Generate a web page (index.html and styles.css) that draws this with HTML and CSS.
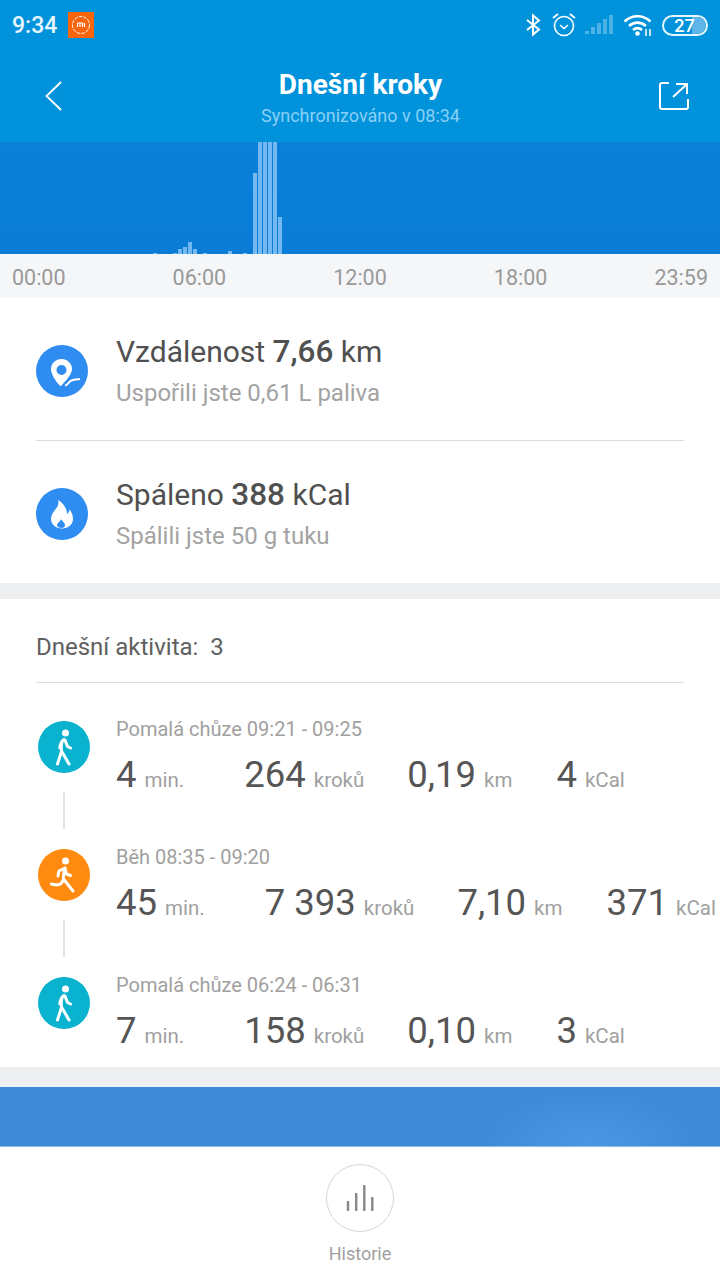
FILE: index.html
```html
<!DOCTYPE html>
<html lang="cs">

<head>
    <meta charset="UTF-8">
    <title>Dnešní kroky</title>
    <link rel="stylesheet" href="styles.css">
</head>

<body>
    <header class="top">
        <div class="status">
            <span class="clock">9:34</span>
            <span class="mi_badge">
                <svg width="26" height="26" viewBox="0 0 26 26">
                    <circle cx="13" cy="13" r="8.500" fill="none" stroke="#fff" stroke-width="1" stroke-dasharray="3.500 1.200" />
                    <path d="M9.500 11h2.500v4M12 11h2.500v4M9.500 11v4M16.500 11v4" fill="none" stroke="#fff" stroke-width="1.200" />
                </svg>
            </span>
            <span class="status_icons">
                <svg width="16" height="24" viewBox="0 0 16 24">
                    <path d="M2 7l12 9.500-6 5V2.500l6 5L2 17" fill="none" stroke="#fff" stroke-width="2" />
                </svg>
                <svg class="alarm" width="26" height="26" viewBox="0 0 26 26">
                    <circle cx="13" cy="14" r="9.500" fill="none" stroke="#fff" stroke-width="1.600" />
                    <path d="M9 13l4 3.500 4-3.500" fill="none" stroke="#fff" stroke-width="1.600" />
                    <path d="M2 6l5-4M24 6l-5-4" fill="none" stroke="#fff" stroke-width="1.800" />
                </svg>
                <svg class="signal" width="28" height="22" viewBox="0 0 28 22">
                    <rect x="0" y="17" width="4" height="3" />
                    <rect x="6" y="13" width="4" height="7" />
                    <rect x="12" y="9" width="4" height="11" />
                    <rect x="18" y="5" width="4" height="15" />
                    <rect x="24" y="1" width="4" height="19" />
                </svg>
                <svg class="wifi" width="30" height="24" viewBox="0 0 30 24">
                    <path d="M1.500 8.500C9 1.500 20 1.500 27.500 8.500M6 13c5-4.500 12-4.500 17 0M10 17c3-2.500 6-2.500 9 0" fill="none" stroke="#fff" stroke-width="2.600" />
                    <circle cx="14.500" cy="20.500" r="2.300" fill="#fff" />
                    <path d="M23 16v7M27 16v7" stroke="#fff" stroke-width="1.500" />
                </svg>
                <span class="battery"><span class="battery_fill"></span><span class="battery_num">27</span></span>
            </span>
        </div>
        <div class="titlebar">
            <svg class="back" width="17" height="30" viewBox="0 0 17 30">
                <path d="M16 1L1.500 15 16 29" fill="none" stroke="#fff" stroke-width="1.800" />
            </svg>
            <div class="title">
                <h1>Dnešní kroky</h1>
                <p>Synchronizováno v 08:34</p>
            </div>
            <svg class="share" width="30" height="30" viewBox="0 0 30 30">
                <path d="M10 2H3a2 2 0 0 0-2 2v22a2 2 0 0 0 2 2h24a2 2 0 0 0 2-2v-8" fill="none" stroke="#fff" stroke-width="2" />
                <path d="M14 16L28 3M17 3h11v10" fill="none" stroke="#fff" stroke-width="2" />
            </svg>
        </div>
    </header>

    <section class="chart">
        <i style="grid-column:31;height:1px"></i>
        <i style="grid-column:35;height:1px"></i>
        <i style="grid-column:36;height:5px"></i>
        <i style="grid-column:37;height:7px"></i>
        <i style="grid-column:38;height:12px"></i>
        <i style="grid-column:39;height:5px"></i>
        <i style="grid-column:41;height:1px"></i>
        <i style="grid-column:46;height:3px"></i>
        <i style="grid-column:49;height:1px"></i>
        <i style="grid-column:51;height:81px"></i>
        <i style="grid-column:52;height:112px"></i>
        <i style="grid-column:53;height:112px"></i>
        <i style="grid-column:54;height:112px"></i>
        <i style="grid-column:55;height:112px"></i>
        <i style="grid-column:56;height:37px"></i>
    </section>

    <div class="axis">
        <span>00:00</span>
        <span>06:00</span>
        <span>12:00</span>
        <span>18:00</span>
        <span>23:59</span>
    </div>

    <section class="summary">
        <div class="stat stat_first">
            <span class="stat_icon">
                <svg width="52" height="52" viewBox="0 0 52 52">
                    <path fill-rule="evenodd" fill="#fff" d="M25.500 14C19.500 14 15 18.500 15 24c0 5 4.500 12 8.500 16.300.8.800 1.500.800 2.200 0C29.500 36 36 29.500 36 24c0-5.500-4.500-10-10.500-10zm0 6a5 5 0 1 1 0 10 5 5 0 0 1 0-10z" />
                    <path d="M29 40.500c3-.5 3.500-4 6.500-5 2.500-.8 5-1 8.500-1.500" fill="none" stroke="#2f8cf0" stroke-width="5" />
                    <path d="M29 40.500c3-.5 3.500-4 6.500-5 2.500-.8 5-1 8.500-1.500" fill="none" stroke="#fff" stroke-width="2" />
                </svg>
            </span>
            <div>
                <h2>Vzdálenost <b>7,66</b> km</h2>
                <p>Uspořili jste 0,61 L paliva</p>
            </div>
        </div>
        <div class="stat">
            <span class="stat_icon">
                <svg width="52" height="52" viewBox="0 0 52 52">
                    <path fill="#fff" fill-rule="evenodd" d="M22 12c1.500 5-1 7.500-3.500 10.500C16.500 25 15 28 15 31c0 5.500 5 9.500 11 9.500S37 36.500 37 31c0-4-1.500-7-3.500-9.500-.3 2-1 3.500-2.500 4.500C31 20.500 27 14.500 22 12zm3 19c.5 2 4 3 4 6.500 0 1.500-1.500 2.500-3.500 2.500S21 39 21 37.500c0-3 3.500-3.500 4-6.500z" />
                </svg>
            </span>
            <div>
                <h2>Spáleno <b>388</b> kCal</h2>
                <p>Spálili jste 50 g tuku</p>
            </div>
        </div>
    </section>

    <section class="activity">
        <h3 class="activity_head">Dnešní aktivita:&nbsp; 3</h3>

        <div class="run_row">
            <div class="marker">
                <span class="dot dot_walk">
                    <svg width="52" height="52" viewBox="0 0 52 52">
                        <use href="#walker" />
                    </svg>
                </span>
                <span class="link"></span>
            </div>
            <div class="run_text">
                <p>Pomalá chůze 09:21 - 09:25</p>
                <div class="nums">
                    <span class="n n_min"><b>4</b>min.</span>
                    <span class="n n_steps"><b>264</b>kroků</span>
                    <span class="n n_km"><b>0,19</b>km</span>
                    <span class="n"><b>4</b>kCal</span>
                </div>
            </div>
        </div>

        <div class="run_row">
            <div class="marker">
                <span class="dot dot_run">
                    <svg width="52" height="52" viewBox="0 0 52 52">
                        <circle cx="27.500" cy="12" r="3.500" fill="#fff" />
                        <path d="M21 22l6-3c-1 4-2 8-1.500 11L35 42M27 19l1.500 6 4 1.500M21 22c-.5 2-1 3.500-1 5M25.500 30c-1 3-2.500 5-4.500 5.500-2.500.5-5 .3-7.500-.5" fill="none" stroke="#fff" stroke-width="3" stroke-linecap="round" stroke-linejoin="round" />
                    </svg>
                </span>
                <span class="link"></span>
            </div>
            <div class="run_text">
                <p>Běh 08:35 - 09:20</p>
                <div class="nums">
                    <span class="n n_min"><b>45</b>min.</span>
                    <span class="n n_steps"><b>7 393</b>kroků</span>
                    <span class="n n_km"><b>7,10</b>km</span>
                    <span class="n"><b>371</b>kCal</span>
                </div>
            </div>
        </div>

        <div class="run_row run_last">
            <div class="marker">
                <span class="dot dot_walk">
                    <svg width="52" height="52" viewBox="0 0 52 52">
                        <use href="#walker" />
                    </svg>
                </span>
            </div>
            <div class="run_text">
                <p>Pomalá chůze 06:24 - 06:31</p>
                <div class="nums">
                    <span class="n n_min"><b>7</b>min.</span>
                    <span class="n n_steps"><b>158</b>kroků</span>
                    <span class="n n_km"><b>0,10</b>km</span>
                    <span class="n"><b>3</b>kCal</span>
                </div>
            </div>
        </div>
    </section>

    <div class="banner"></div>

    <footer class="bottom">
        <span class="hist_btn">
            <svg width="28" height="26" viewBox="0 0 28 26">
                <path d="M2 26V16M10.200 26V8M18.300 26V0M26.300 26V12" fill="none" stroke="#888" stroke-width="2.400" />
            </svg>
        </span>
        <span class="hist_label">Historie</span>
    </footer>

    <svg width="0" height="0" class="defs">
        <symbol id="walker" viewBox="0 0 52 52">
            <circle cx="27.500" cy="12" r="3.500" fill="#fff" />
            <path d="M26 18.500c-2.500 1.500-3 7-2.500 12L19.500 43M23.500 30l7.500 13M27 19l2.500 6.500 3 1.500" fill="none" stroke="#fff" stroke-width="3" stroke-linecap="round" stroke-linejoin="round" />
            <path d="M25 19c-2 1.500-3 4-3.500 8" fill="none" stroke="#fff" stroke-width="2.500" stroke-linecap="round" />
        </symbol>
    </svg>
</body>

</html>
```

FILE: styles.css
```css
* {
    box-sizing: border-box;
}

html,
body {
    margin: 0;
    padding: 0;
}

body {
    width: 720px;
    height: 1280px;
    overflow: hidden;
    background-color: #eeeff1;
    font-family: Roboto, "Noto Sans", sans-serif;
    color: #555555;
}

h1,
h2,
h3,
p {
    margin: 0;
    font-weight: normal;
}

.defs {
    display: block;
    height: 0;
}

/* top */
.top {
    height: 142px;
    background: #0092da;
    color: white;
}

.status {
    height: 50px;
    display: flex;
    align-items: center;
    padding-left: 12px;
    padding-right: 12px;
}

.clock {
    font-size: 23px;
    font-weight: 500;
    color: #e6f6ff;
}

.mi_badge {
    width: 26px;
    height: 26px;
    margin-left: 11px;
    background: #f9650f;
    display: flex;
}

.status_icons {
    margin-left: auto;
    display: flex;
    align-items: center;
}

.alarm {
    margin-left: 10px;
}

.signal {
    margin-left: 8px;
    fill: #ffffff;
    opacity: 0.3;
}

.wifi {
    margin-left: 10px;
}

.battery {
    position: relative;
    width: 46px;
    height: 21px;
    margin-left: 9px;
    border: 2px solid #e6f6ff;
    border-radius: 11px;
    overflow: hidden;
}

.battery_fill {
    position: absolute;
    left: 28px;
    top: 0;
    bottom: 0;
    right: 0;
    background: #5db5ea;
}

.battery_num {
    position: relative;
    display: block;
    text-align: center;
    font-size: 18px;
    font-weight: 500;
    line-height: 17px;
    margin-right: 1px;
}

.titlebar {
    display: flex;
    align-items: center;
    justify-content: space-between;
    height: 72px;
    margin-top: 10px;
    padding-left: 45px;
    padding-right: 31px;
}

.title {
    text-align: center;
    margin-top: 5px;
}

.title h1 {
    font-size: 28px;
    font-weight: 700;
    line-height: 32px;
    color: white;
}

.title p {
    font-size: 18px;
    line-height: 24px;
    margin-top: 3px;
    color: #8ad0f6;
}

/* chart */
.chart {
    height: 112px;
    display: grid;
    grid-template-columns: repeat(144, 5px);
    align-items: end;
    padding-left: 3px;
    background: linear-gradient(#0a80d8, #0a7cd6);
}

.chart i {
    grid-row: 1;
    display: block;
    width: 4px;
    background: #73b8f0;
}

.axis {
    height: 44px;
    display: flex;
    justify-content: space-between;
    align-items: center;
    padding-left: 12px;
    padding-right: 12px;
    padding-top: 2px;
    background: #f5f6f8;
    font-size: 21.500px;
    color: #999999;
}

/* summary */
.summary {
    height: 285px;
    padding-left: 36px;
    padding-right: 36px;
    background: white;
}

.stat {
    height: 142px;
    display: flex;
    align-items: center;
    gap: 28px;
    padding-top: 4px;
}

.stat_first {
    border-bottom: 1px solid #dcdcdc;
    height: 143px;
}

.stat_icon {
    width: 52px;
    height: 52px;
    flex: none;
    display: flex;
    border-radius: 50%;
    background: #2f8cf0;
}

.stat h2 {
    font-size: 30px;
    line-height: 38px;
    color: #505050;
}

.stat h2 b {
    font-size: 31.500px;
    font-weight: 500;
}

.stat p {
    font-size: 24px;
    line-height: 34px;
    margin-top: 5px;
    color: #a3a3a3;
}

/* activity */
.activity {
    height: 468px;
    margin-top: 16px;
    padding-left: 36px;
    padding-right: 0;
    background: white;
}

.activity_head {
    height: 84px;
    margin-right: 36px;
    margin-bottom: 38px;
    display: flex;
    align-items: center;
    padding-top: 12px;
    border-bottom: 1px solid #dcdcdc;
    font-size: 24px;
    color: #606060;
}

.run_row {
    display: flex;
    height: 128px;
    padding-left: 2px;
}

.run_last {
    height: 90px;
}

.marker {
    width: 52px;
    flex: none;
    display: flex;
    flex-direction: column;
    align-items: center;
}

.dot {
    width: 52px;
    height: 52px;
    flex: none;
    display: flex;
    border-radius: 50%;
}

.dot_walk {
    background: #09b2cf;
}

.dot_run {
    background: #ff8a10;
}

.link {
    width: 2px;
    height: 37px;
    margin-top: 19px;
    flex: none;
    background: #e2e2e2;
}

.run_text {
    margin-left: 26px;
    margin-top: -4px;
}

.run_text p {
    font-size: 20px;
    line-height: 24px;
    color: #a0a0a0;
}

.nums {
    display: flex;
    align-items: baseline;
    margin-top: 12px;
    white-space: nowrap;
}

.n {
    font-size: 20.500px;
    color: #a0a0a0;
}

.n b {
    font-size: 36.500px;
    font-weight: 400;
    color: #555555;
    margin-right: 8px;
}

.n_min {
    margin-right: 60px;
}

.n_steps {
    margin-right: 43px;
}

.n_km {
    margin-right: 44px;
}

/* banner and bottom */
.banner {
    height: 60px;
    margin-top: 20px;
    border-bottom: 1px solid #8fbbea;
    background: radial-gradient(ellipse 110px 60px at 590px 60px, #4a96e4, #3f89d9 100%);
}

.bottom {
    height: 133px;
    display: flex;
    flex-direction: column;
    align-items: center;
    padding-top: 17px;
    background: white;
}

.hist_btn {
    width: 68px;
    height: 68px;
    display: flex;
    align-items: center;
    justify-content: center;
    border: 1px solid #d6d6d6;
    border-radius: 50%;
}

.hist_label {
    margin-top: 11px;
    font-size: 18px;
    color: #a0a0a0;
}
```
